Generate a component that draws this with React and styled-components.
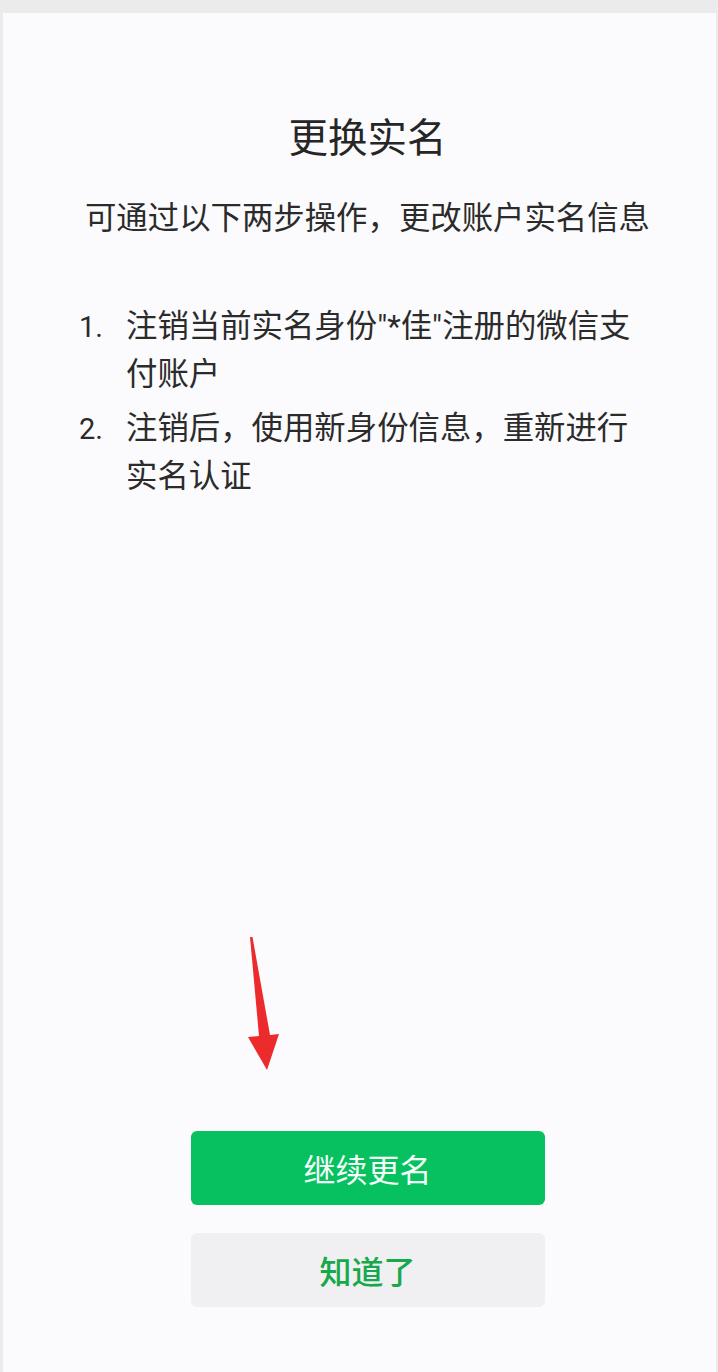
import React from 'react';
import styled, { createGlobalStyle } from 'styled-components';

const GlobalStyle = createGlobalStyle`
  html, body {
    margin: 0;
    padding: 0;
    background: #ebebeb;
  }
  body {
    font-family: Roboto, "Noto Sans CJK SC", sans-serif;
  }
`;

const Page = styled.div`
  min-height: 100vh;
  box-sizing: border-box;
  padding: 13px 2px 0 3px;
  background: #ebebeb;
  display: flex;
`;

const Panel = styled.main`
  flex: 1;
  display: flex;
  flex-direction: column;
  align-items: center;
  box-sizing: border-box;
  padding: 101px 0 65px 16px;
  background: #fbfbfd;
  color: #2b2b2b;
`;

const Title = styled.h1`
  margin: 0;
  font-size: 39.5px;
  line-height: 50px;
  font-weight: 400;
  color: #262626;
`;

const Subtitle = styled.p`
  margin: 33px 0 0;
  font-size: 31.4px;
  line-height: 44px;
`;

const Steps = styled.ol`
  list-style: none;
  margin: 62px 0 0;
  padding: 0;
  align-self: flex-start;
  margin-left: 60px;
  display: flex;
  flex-direction: column;
  gap: 6px;
`;

const Step = styled.li`
  display: grid;
  grid-template-columns: 47px 516px;
  font-size: 31.4px;
  line-height: 48px;
`;

const Marker = styled.span`
  font-size: 29px;
`;

const Actions = styled.div`
  position: relative;
  margin-top: auto;
  display: flex;
  flex-direction: column;
  gap: 28px;
`;

const Button = styled.button`
  width: 354px;
  height: 74px;
  border: none;
  border-radius: 6px;
  font-family: inherit;
  font-size: 32px;
  font-weight: ${props => (props.$primary ? 400 : 500)};
  background: ${props => (props.$primary ? '#07c160' : '#f0eff1')};
  color: ${props => (props.$primary ? '#f4fff8' : '#16a84a')};
  cursor: pointer;
`;

const Pointer = styled.svg`
  position: absolute;
  left: 53px;
  top: -196px;
  width: 40px;
  height: 138px;
`;

const steps = [
  { num: '1.', text: '注销当前实名身份"*佳"注册的微信支付账户' },
  { num: '2.', text: '注销后，使用新身份信息，重新进行实名认证' }
];

const App = () => {
  return (
    <>
      <GlobalStyle />
      <Page>
        <Panel>
          <Title>更换实名</Title>
          <Subtitle>可通过以下两步操作，更改账户实名信息</Subtitle>
          <Steps>
            {steps.map(step => (
              <Step key={step.num}>
                <Marker>{step.num}</Marker>
                <span>{step.text}</span>
              </Step>
            ))}
          </Steps>
          <Actions>
            <Pointer viewBox="0 0 40 138">
              <path d="M6 2 L8.5 2 L26 100 L35 99 L23 135 L4 102 L15 101 Z" fill="#ec2b2c" />
            </Pointer>
            <Button $primary>继续更名</Button>
            <Button>知道了</Button>
          </Actions>
        </Panel>
      </Page>
    </>
  );
};

export default App;
